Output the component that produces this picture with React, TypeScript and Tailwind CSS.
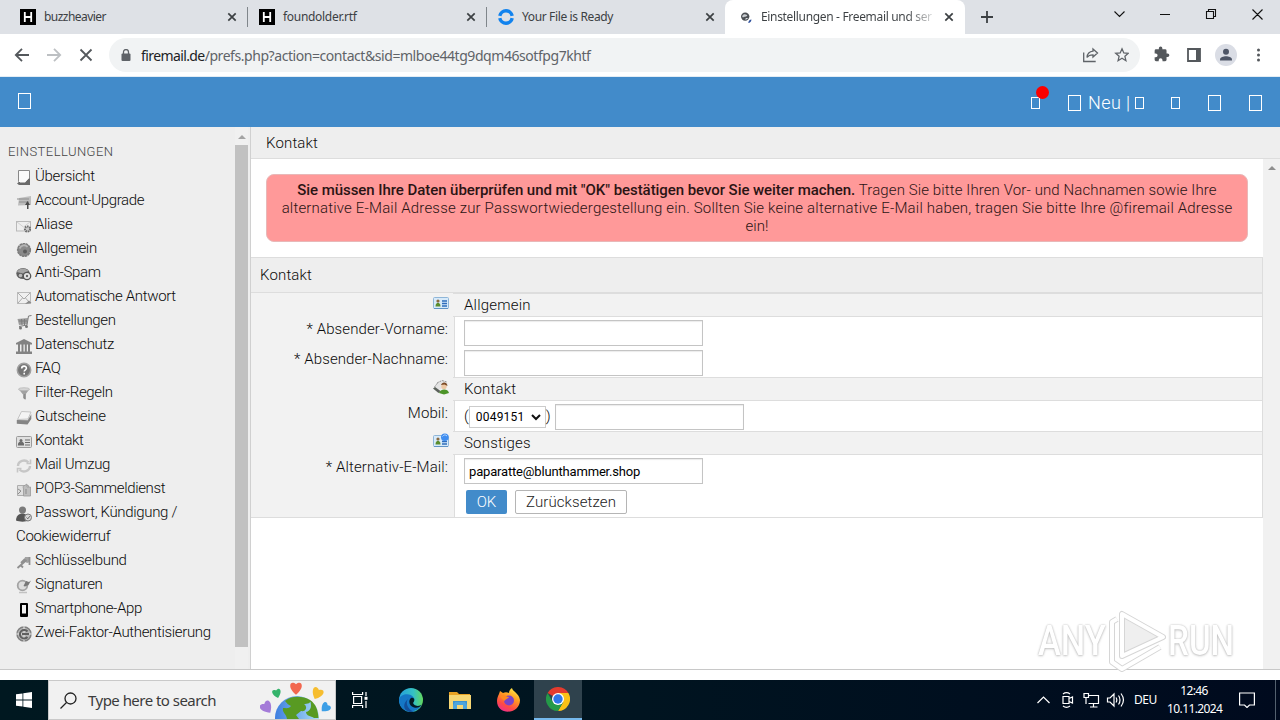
import type { ReactNode } from "react";
import clsx from "clsx";

const UI = "font-['Noto_Sans','Open_Sans',sans-serif]";
const PAGE = "font-['Roboto',sans-serif] font-light";

/* ---------- browser chrome ---------- */

function CloseX({ className }: { className?: string }) {
  return (
    <svg className={clsx("size-2.5 shrink-0", className)} viewBox="0 0 10 10">
      <path d="M1.3 1.3 8.7 8.7M8.7 1.3 1.3 8.7" stroke="#3c4043" strokeWidth="1.7" />
    </svg>
  );
}

function HIcon() {
  return (
    <svg className="size-4 shrink-0" viewBox="0 0 16 16">
      <rect width="16" height="16" fill="#000" />
      <path d="M4.8 3v10M11.2 3v10M5 8h6" stroke="#fff" strokeWidth="1.8" fill="none" />
    </svg>
  );
}

function RingIcon() {
  return (
    <svg className="size-4 shrink-0" viewBox="0 0 16 16" fill="none" stroke="#1283ee" strokeWidth="3.4">
      <path d="M1.8 6.9a6.3 6.3 0 0 1 12.4 0" />
      <path d="M14.2 9.1a6.3 6.3 0 0 1-12.4 0" />
    </svg>
  );
}

function GlobeIcon() {
  return (
    <svg className="size-4 shrink-0" viewBox="0 0 16 16">
      <circle cx="6.200" cy="7.6" r="4.200" fill="#4c5054" />
      <path d="M3.200 7.300c1-2.600 3.400-2.200 4.800-1.200 1 .8-.6 1.600-1.800 1.600S3.400 9.400 3.200 7.300Z" fill="#c9cdd1" />
      <path d="M6 10.300c.5-1 1.800-1.400 3-1.200-.6 1.300-1.800 1.800-3 1.200Z" fill="#dfe3e6" />
      <path d="M9.300 14c.2-2.200 1.300-3.200 3.200-3.500-.2 2.200-1.500 3.300-3.200 3.500Z" fill="#2d4f9c" />
    </svg>
  );
}

function Tab({ icon, title, wide, track }: { icon: ReactNode; title: string; wide: string; track: string }) {
  return (
    <div className={clsx("flex h-full items-center", wide)}>
      {icon}
      <span className={clsx("ml-2 flex-1 whitespace-nowrap", track)}>{title}</span>
      <CloseX />
    </div>
  );
}

function TabStrip() {
  return (
    <div className={clsx("flex h-[34px] bg-[#dee1e6] text-[12px] text-[#3c4043]", UI)}>
      <div className="flex items-center pl-5">
        <Tab icon={<HIcon />} title="buzzheavier" wide="w-[217px]" track="tracking-[-0.55px]" />
        <div className="ml-[10px] h-5 w-px bg-[#80868b]" />
        <Tab icon={<HIcon />} title="foundolder.rtf" wide="ml-[11px] w-[217px]" track="tracking-[-0.3px]" />
        <div className="ml-[10px] h-5 w-px bg-[#80868b]" />
        <Tab icon={<RingIcon />} title="Your File is Ready" wide="ml-[11px] w-[217px]" track="tracking-[-0.37px]" />
      </div>
      <div className="ml-[10px] flex w-[240px] items-center rounded-t-lg bg-white pr-[11px] pl-[14px]">
        <GlobeIcon />
        <span className="ml-[6px] bg-linear-to-r from-[#3c4043] from-85% to-[#3c4043]/20 bg-clip-text tracking-[-0.33px] whitespace-nowrap text-transparent">
          Einstellungen - Freemail und ser
        </span>
        <CloseX className="ml-auto" />
      </div>
      <svg className="mt-[11px] ml-[16px] size-3" viewBox="0 0 12 12">
        <path d="M6 0v12M0 6h12" stroke="#3c4043" strokeWidth="1.8" />
      </svg>
      <svg className="mt-[6px] ml-auto h-4 w-[166px]" viewBox="0 0 166 16" fill="none" stroke="#111" strokeWidth="1.1">
        <path d="m0.500 5.500 5 5 5-5M46 8.500h10M92.500 5.500h7v7h-7zM94.500 5.500v-2h7v7h-2M138.500 3.500l10 10M148.500 3.500l-10 10" />
      </svg>
    </div>
  );
}

function Toolbar() {
  return (
    <div className={clsx("flex h-[43px] items-center border-b border-[#e3edf5] bg-white", UI)}>
      <svg className="ml-[14px] h-4 w-20 shrink-0" viewBox="0 0 80 16" fill="none" strokeWidth="1.8">
        <path d="M15 8H2M8 1.800 1.800 8 8 14.200" stroke="#54585c" />
        <path d="M33 8h13M40 1.800 46.200 8 40 14.200" stroke="#bdc0c3" />
        <path d="m66.500 2.500 11 11M77.500 2.500l-11 11" stroke="#54585c" />
      </svg>
      <div className="ml-[15px] flex h-[34px] w-[1031px] items-center rounded-full bg-[#f1f3f4] pr-[11px] pl-[12px]">
        <svg className="h-3 w-[10px] shrink-0" viewBox="0 0 10 12">
          <rect x="0.500" y="4.500" width="9" height="7.500" rx="1" fill="#5f6368" />
          <path d="M2.500 5V3a2.500 2.500 0 0 1 5 0v2" fill="none" stroke="#5f6368" strokeWidth="1.300" />
        </svg>
        <span className="ml-[10px] text-[14px] tracking-[-0.44px] whitespace-nowrap text-[#5f6368]">
          <span className="tracking-[-0.6px] text-[#202124]">firemail.de</span>/prefs.php?action=contact&amp;sid=mlboe44tg9dqm46sotfpg7khtf
        </span>
        <svg className="ml-auto h-4 w-[46px] shrink-0" viewBox="0 0 46 16" fill="none" stroke="#5f6368" strokeWidth="1.300">
          <path d="M.7 5.500v9h12M10 2l4.500 4-4.500 4V7.800c-3 0-4.800.8-6 2.700C4.300 7 6.500 4.500 10 4.200z" />
          <path d="m39 1.800 1.800 4.100 4.500.4-3.400 3 1 4.400-3.900-2.400-3.900 2.400 1-4.400-3.400-3 4.500-.4z" />
        </svg>
      </div>
      <svg className="ml-3 size-5" viewBox="0 0 24 24" fill="#54585c">
        <path d="M20.500 11H19V7a2 2 0 0 0-2-2h-4V3.500a2.500 2.500 0 0 0-5 0V5H4a2 2 0 0 0-2 2v3.800h1.500a2.700 2.700 0 0 1 0 5.400H2V20c0 1.100.9 2 2 2h3.800v-1.500a2.700 2.700 0 0 1 5.400 0V22H17a2 2 0 0 0 2-2v-4h1.500a2.500 2.500 0 0 0 0-5Z" transform="translate(1.500 1) scale(.84)" />
      </svg>
      <svg className="ml-[15px] h-[14px] w-[14px]" viewBox="0 0 14 14">
        <path d="M1 1h12v12H1z" fill="none" stroke="#54585c" strokeWidth="1.800" />
        <path d="M9 1h4v12H9z" fill="#54585c" />
      </svg>
      <svg className="ml-[14px] size-[22px]" viewBox="0 0 22 22">
        <circle cx="11" cy="11" r="11" fill="#dadde5" />
        <circle cx="11" cy="7.800" r="3" fill="#4d5566" />
        <path d="M5 16.500v-1c0-2 3.500-3.200 6-3.200s6 1.200 6 3.200v1z" fill="#4d5566" />
      </svg>
      <svg className="ml-5 h-[14px] w-1" viewBox="0 0 4 14" fill="#54585c">
        <circle cx="1.500" cy="2" r="1.500" />
        <circle cx="1.500" cy="7" r="1.500" />
        <circle cx="1.500" cy="12" r="1.500" />
      </svg>
    </div>
  );
}

/* ---------- site header ---------- */

function Box({ className }: { className: string }) {
  return <span className={clsx("shrink-0 border border-white", className)} />;
}

function SiteHeader() {
  return (
    <header className={clsx("flex h-[50px] items-start bg-[#428bca] text-white", PAGE)}>
      <Box className="mt-4 ml-[18px] h-4 w-[13px]" />
      <div className="ml-auto flex h-[52px] items-center pr-[18px]">
        <span className="relative mr-7 flex">
          <Box className="h-3 w-[9px]" />
          <span className="absolute -top-[11px] left-[5px] size-[13px] rounded-full bg-[#fb0000]" />
        </span>
        <Box className="h-4 w-[13px]" />
        <span className="ml-[7px] w-[47px] text-[18px] leading-5 tracking-[0.4px] whitespace-nowrap">Neu |</span>
        <Box className="h-3 w-[9px]" />
        <Box className="ml-[27px] h-3 w-[9px]" />
        <Box className="ml-7 h-4 w-[13px]" />
        <Box className="ml-7 h-4 w-[13px]" />
      </div>
    </header>
  );
}

/* ---------- sidebar ---------- */

const navIcons: Record<string, ReactNode> = {
  page: (
    <>
      <path d="M2.500.500h11v13h-10l-1-2z" fill="#fafafa" stroke="#888" />
      <path d="M1 13.500 3 12h6l3.500-3.500H14V15H3z" fill="#6a6a6a" />
      <path d="M4 12.500h5l3.500-4V2H4z" fill="#fafafa" />
    </>
  ),
  upgrade: (
    <>
      <path d="M3 4 15 2v9L2 11.500z" fill="#bdbdbd" />
      <path d="M1 5h12M3 8h10" stroke="#8d8d8d" />
      <path d="m11.500 7-2.500 4h2v4h1.500v-4H14z" fill="#4a4a4a" />
    </>
  ),
  mailGear: (
    <>
      <rect x=".5" y="3.500" width="14" height="9.500" fill="#eee" stroke="#b9b9b9" />
      <path d="m1 4 6.500 5L14 4" stroke="#d0d0d0" fill="none" />
      <circle cx="11.500" cy="11" r="2.600" fill="#ccc" stroke="#6b6b6b" strokeWidth="2" strokeDasharray="1.500 .8" />
    </>
  ),
  gear: (
    <>
      <circle cx="8" cy="8" r="6.200" fill="#8a8a8a" stroke="#7d7d7d" strokeWidth="1.800" strokeDasharray="2.500 .5" />
      <path d="M3.500 6.500c2-4 6-4 8-1.500" stroke="#b5b5b5" strokeWidth="1.800" fill="none" />
      <circle cx="9" cy="9.500" r="2" fill="#5c5c5c" />
    </>
  ),
  spam: (
    <>
      <ellipse cx="7" cy="7.500" rx="6.700" ry="5.500" fill="#5f5f5f" />
      <path d="M.8 6c3-5 9-4 12-1L7 7.500z" fill="#a5a5a5" />
      <circle cx="11" cy="10" r="3.700" fill="#e6e6e6" stroke="#555" strokeWidth="1.300" />
      <circle cx="4.500" cy="9.500" r="1.800" fill="#bbb" />
      <circle cx="11" cy="10" r="1.200" fill="#666" />
    </>
  ),
  mail: (
    <>
      <rect x="1.500" y="2.500" width="13" height="11" fill="#efefef" stroke="#bbb" />
      <path d="m2 3 6 6 6-6M2 13l4.500-5M14 13 9.500 8" stroke="#aaa" fill="none" />
      <path d="m9 14 4-3.500 2.500 2.500z" fill="#888" />
    </>
  ),
  cart: (
    <>
      <path d="M1.500 5 12 4l-1 6-8 1z" fill="#9c9c9c" />
      <path d="M15.500 1.500 12.500 2 11 11l-8 1.500M3 7h8M5.500 5l.5 6M8.500 5v6" stroke="#7d7d7d" fill="none" />
      <circle cx="4.500" cy="14" r="1.500" fill="#777" />
      <circle cx="10.500" cy="12.500" r="1.500" fill="#777" />
    </>
  ),
  bank: (
    <>
      <path d="M0 5 8 1l8 4v1.500H0zM0 13.500h16V16H0z" fill="#838383" />
      <path d="M3 6v8M6.500 6v8M9.800 6v8M13 6v8" stroke="#838383" strokeWidth="2" />
    </>
  ),
  help: (
    <>
      <circle cx="8" cy="8" r="6.700" fill="#757575" stroke="#a0a0a0" strokeWidth="1.500" />
      <path d="M5.700 6.500C5.700 3.300 10.500 3.500 10.400 6.300c0 1.500-2.200 1.600-2.200 3.300M8.200 10.800v1.700" stroke="#fff" strokeWidth="1.600" fill="none" />
    </>
  ),
  funnel: (
    <>
      <path d="M2.500 3h11L9.500 8.500V14l-2.500-2V8.500z" fill="#a2a2a2" />
      <ellipse cx="8" cy="3.200" rx="5.500" ry="1.500" fill="#d5d5d5" stroke="#aaa" strokeWidth=".6" />
      <path d="M9 8v5" stroke="#777" />
    </>
  ),
  voucher: (
    <>
      <path d="M5.500 1.500 15 2l-3 7-10.500.500z" fill="#f4f4f4" stroke="#c4c4c4" />
      <path d="m.8 10 11 .3 3.500-6V9l-3.800 5.500-10.700-.7z" fill="#858585" />
    </>
  ),
  card: (
    <>
      <rect x=".5" y="2.500" width="15" height="11" rx="1" fill="#e0e0e0" stroke="#9b9b9b" />
      <circle cx="5" cy="6.500" r="1.500" fill="#6b6b6b" />
      <path d="M2.500 11c0-4 5-4 5 0zM9 6h5M9 8.500h5M9 11h5" stroke="#6b6b6b" fill="#6b6b6b" strokeWidth="1.200" />
    </>
  ),
  sync: (
    <g fill="none" stroke="#c6c6c6" strokeWidth="2.400">
      <path d="M2 8a6 5.500 0 0 1 10.500-3.500M14 8A6 5.500 0 0 1 3.500 11.500" />
      <path d="M14.500 1.500v4h-4M1.500 14.500v-4h4" strokeWidth="1.600" />
    </g>
  ),
  pop: (
    <>
      <path d="M1.500 3.500h11v10h-11z" fill="#dedede" stroke="#adadad" />
      <path d="M7 4.500 11 2v3h3.500v9H7.500V7z" fill="#bdbdbd" stroke="#999" strokeWidth=".8" />
      <path d="m2 7 3 2-3 3M10 7v5" stroke="#8d8d8d" fill="none" />
    </>
  ),
  user: (
    <>
      <circle cx="6.500" cy="4" r="3.500" fill="#7a7a7a" />
      <path d="M0 14.500C0 5 12.500 5 13 14.500 10 16 3 16 0 14.500z" fill="#555" />
      <circle cx="12" cy="11.500" r="3.500" fill="#d5d5d5" stroke="#777" />
      <path d="m10.500 11.500 1.300 1.300 2-2.600" stroke="#666" fill="none" />
    </>
  ),
  keys: (
    <>
      <path d="M9 3h5v5l-3 1-3-2z" fill="#a2a2a2" />
      <path d="m10.500 6-9 8M5 9l4-4M5 11.500l2 2M13.500 3v8" stroke="#8f8f8f" strokeWidth="1.800" />
    </>
  ),
  sign: (
    <>
      <circle cx="6.500" cy="7.500" r="4.800" fill="#ddd" stroke="#a4a4a4" strokeWidth="1.800" />
      <path d="M7.500 8 10 3l3 1 2-1.500L12.500 7 9 8.500z" fill="#777" />
      <path d="M3 14.500h8" stroke="#c2c2c2" strokeWidth="1.500" />
    </>
  ),
  phone: (
    <>
      <rect x="4" y="1" width="8" height="14" rx="1" fill="#000" />
      <rect x="6" y="3" width="4" height="8.500" fill="#f3f3f3" />
    </>
  ),
  auth: (
    <>
      <circle cx="8" cy="8" r="7" fill="#b5b5b5" stroke="#808080" strokeWidth="1.500" />
      <path d="M8 0v16M0 8h16" stroke="#e5e5e5" />
      <path d="M11.500 5.500A4.300 4.300 0 1 0 11.500 11M6 8h7" stroke="#5f5f5f" strokeWidth="2" fill="none" />
    </>
  ),
};

const navItems: { icon: string; label: string }[] = [
  { icon: "page", label: "Übersicht" },
  { icon: "upgrade", label: "Account-Upgrade" },
  { icon: "mailGear", label: "Aliase" },
  { icon: "gear", label: "Allgemein" },
  { icon: "spam", label: "Anti-Spam" },
  { icon: "mail", label: "Automatische Antwort" },
  { icon: "cart", label: "Bestellungen" },
  { icon: "bank", label: "Datenschutz" },
  { icon: "help", label: "FAQ" },
  { icon: "funnel", label: "Filter-Regeln" },
  { icon: "voucher", label: "Gutscheine" },
  { icon: "card", label: "Kontakt" },
  { icon: "sync", label: "Mail Umzug" },
  { icon: "pop", label: "POP3-Sammeldienst" },
  { icon: "user", label: "Passwort, Kündigung / Cookiewiderruf" },
  { icon: "keys", label: "Schlüsselbund" },
  { icon: "sign", label: "Signaturen" },
  { icon: "phone", label: "Smartphone-App" },
  { icon: "auth", label: "Zwei-Faktor-Authentisierung" },
];

function Sidebar() {
  return (
    <aside className="flex w-[250px] shrink-0 bg-[#eeeeee]">
      <div className="w-[235px] pt-[14px]">
        <h2 className="pl-2 text-[13px] leading-[22px] font-light tracking-[0.45px] text-[#444]">EINSTELLUNGEN</h2>
        <ul className="pt-px pl-4 text-[15px] leading-6 tracking-[-0.34px] text-[#0c0c0c]">
          {navItems.map((item) => (
            <li key={item.label} className="w-[200px]">
              <svg className="relative top-[2px] mr-[3px] inline-block size-4 align-[-3px]" viewBox="0 0 16 16">
                {navIcons[item.icon]}
              </svg>
              {item.label}
            </li>
          ))}
        </ul>
      </div>
      <div className="flex w-[13px] flex-col items-center bg-[#f0f0f0]">
        <svg className="mt-[8px] h-[4px] w-2" viewBox="0 0 8 4">
          <path d="M0 4 4 0l4 4z" fill="#a3a3a3" />
        </svg>
        <div className="mt-[6px] h-[502px] w-full bg-[#c1c1c1]" />
      </div>
    </aside>
  );
}

/* ---------- form ---------- */

function IdCard({ badge }: { badge?: boolean }) {
  return (
    <svg className="size-4" viewBox="0 0 16 16">
      <rect x=".5" y="2.500" width="15" height="11" rx="1" fill="#d7eafa" stroke="#8fb6d8" />
      <path d="M1 13.500h14" stroke="#5f93c4" />
      <circle cx="5" cy="6" r="1.600" fill="#8a6a40" />
      <path d="M2.500 11.500c0-5 5-5 5 0z" fill="#5b8d2d" />
      <path d="M9 6h5M9 8.500h5M9 11h5" stroke="#2f6dbb" strokeWidth="1.300" />
      {badge && <circle cx="11.800" cy="4.200" r="3.800" fill="#3f8df0" />}
      {badge && <path d="M9.500 3.500c1.500-2 3-2 4.500-.5" stroke="#b5d7ff" fill="none" />}
    </svg>
  );
}

function ContactIcon() {
  return (
    <svg className="size-4" viewBox="0 0 16 16">
      <path d="M1 8 6 2h6l3 3-2 3-8 3z" fill="#e4e4e4" />
      <path d="m1.500 8 3-4M4 4l5-2.500 5 1.500" stroke="#999" fill="none" strokeDasharray="2 .8" />
      <circle cx="11" cy="7.500" r="2.700" fill="#edc8a4" />
      <path d="M8 6c1-3.500 6-3.500 6.500 1l-3-1.500z" fill="#7c4a24" />
      <path d="M6 14c1-4.500 9-5 10 0l-5 1.500z" fill="#4c9428" />
      <path d="m0 9.500 2-1.500 5.500 4-2 2z" fill="#5c625c" />
    </svg>
  );
}

function Section({ icon, title, children }: { icon: ReactNode; title: string; children: ReactNode }) {
  return (
    <>
      <div className="flex h-6 bg-[#f2f2f2]">
        <div className="flex w-[202px] justify-end pt-[2px] pr-[4px]">{icon}</div>
        <div className="flex-1 border-y border-[#ddd] pl-[11px] leading-[23px] tracking-[0.2px]">{title}</div>
      </div>
      {children}
    </>
  );
}

function Row({ label, height, children }: { label?: string; height: string; children: ReactNode }) {
  return (
    <div className={clsx("flex", height)}>
      <div className="w-[202px] bg-[#f2f2f2] pr-[5px] text-right leading-6 tracking-[0.1px]">{label}</div>
      <div className="ml-px flex flex-1 items-start border-l border-[#ddd] pl-[9px]">{children}</div>
    </div>
  );
}

const FIELD = "border border-[#c4c4c4] bg-white text-[13px] font-normal text-black shadow-[inset_0_1px_1px_rgba(0,0,0,0.08)] outline-none";

function ContactForm() {
  return (
    <form className="mt-[15px] border-y border-r border-[#ddd] bg-[linear-gradient(to_right,#f2f2f2_203px,#fff_203px)]">
      <div className="h-[35px] border-b border-[#ddd] bg-[#eeeeee] pl-[9px] leading-[34px] tracking-[0.15px]">Kontakt</div>
      <Section icon={<IdCard />} title="Allgemein">
        <Row label="* Absender-Vorname:" height="h-[30px]">
          <input className={clsx("mt-[3px] h-[26px] w-[239px]", FIELD)} />
        </Row>
        <Row label="* Absender-Nachname:" height="h-[30px]">
          <input className={clsx("mt-[3px] h-[26px] w-[239px]", FIELD)} />
        </Row>
      </Section>
      <Section icon={<ContactIcon />} title="Kontakt">
        <Row label="Mobil:" height="h-[30px]">
          <span className="mt-[2px] leading-[26px]">(</span>
          <span className="mt-[5px] flex h-[22px] w-[77px] items-center justify-between border border-[#ccc] bg-white pr-[4px] pl-[6px] text-[12px] font-normal tracking-[0.2px] text-black">
            0049151
            <svg className="h-[7px] w-[10px]" viewBox="0 0 10 7">
              <path d="m1 1 4 4 4-4" fill="none" stroke="#111" strokeWidth="2" />
            </svg>
          </span>
          <span className="mt-[2px] leading-[26px]">)</span>
          <input className={clsx("mt-[3px] ml-1 h-[26px] w-[189px]", FIELD)} />
        </Row>
      </Section>
      <Section icon={<IdCard badge />} title="Sonstiges">
        <Row label="* Alternativ-E-Mail:" height="h-[32px]">
          <input
            defaultValue="paparatte@blunthammer.shop"
            className={clsx("mt-[3px] h-[26px] w-[239px] px-1 tracking-[-0.17px]", FIELD)}
          />
        </Row>
        <Row height="h-[30px]">
          <button type="button" className="mt-[3px] ml-[2px] h-6 w-[41px] rounded-xs bg-[#428bca] text-white">OK</button>
          <button type="button" className="mt-[3px] ml-2 h-6 w-28 rounded-xs border border-[#b5b5b5] bg-white tracking-[0.1px] text-[#222]">
            Zurücksetzen
          </button>
        </Row>
      </Section>
    </form>
  );
}

function Watermark() {
  return (
    <div className="absolute top-[451px] left-[787px] flex h-[62px] w-[200px] items-center">
      <span className="w-[66px] origin-left scale-x-[0.82] text-[42px] leading-[44px] font-medium text-white [text-shadow:0_0_2px_#b5b5b5,0_1px_3px_#c9c9c9]">
        ANY
      </span>
      <svg className="ml-[3px] h-[62px] w-[60px]" viewBox="0 0 60 62" fill="none">
        <path d="M15 4v42l41-19z" fill="#efefef" />
        <g stroke="#d6d6d6" strokeWidth="6" strokeLinejoin="round">
          <path d="M10 9 5 12v40l10 7 38-22" />
          <path d="M15 4v42l41-19z" />
        </g>
        <g stroke="#fff" strokeWidth="4" strokeLinejoin="round">
          <path d="M10 9 5 12v40l10 7 38-22" />
          <path d="M15 4v42l41-19z" />
        </g>
      </svg>
      <span className="ml-px w-[64px] origin-left scale-x-[0.79] text-[42px] leading-[44px] font-medium text-white [text-shadow:0_0_2px_#b5b5b5,0_1px_3px_#c9c9c9]">
        RUN
      </span>
    </div>
  );
}

function Main() {
  return (
    <main className="flex flex-1 flex-col border-l border-[#d0d0d0] text-[15px] text-[#0c0c0c]">
      <div className="h-8 border-b border-[#ddd] bg-[#eeeeee] pl-[15px] leading-8 tracking-[0.15px]">Kontakt</div>
      <div className="relative flex flex-1">
        <div className="w-[1012px]">
          <div className="mt-[15px] mr-[15px] ml-[15px] h-[68px] rounded-lg border border-[#e8b8b8] bg-[#ff9999] px-3 pt-[6px] text-center leading-[18px] whitespace-nowrap text-[#2b1414]">
            <b className="font-medium tracking-[-0.06px]">Sie müssen Ihre Daten überprüfen und mit "OK" bestätigen bevor Sie weiter machen.</b>{" "}
            <span className="tracking-[0.11px]">Tragen Sie bitte Ihren Vor- und Nachnamen sowie Ihre</span>
            <br />
            <span className="tracking-[0.175px]">
              alternative E-Mail Adresse zur Passwortwiedergestellung ein. Sollten Sie keine alternative E-Mail haben, tragen Sie bitte Ihre @firemail Adresse
            </span>
            <br />
            ein!
          </div>
          <ContactForm />
        </div>
        <div className="flex w-[17px] justify-center bg-[#f1f1f1] pt-[7px]">
          <svg className="h-[4px] w-2" viewBox="0 0 8 4">
            <path d="M0 4 4 0l4 4z" fill="#8f8f8f" />
          </svg>
        </div>
        <Watermark />
      </div>
    </main>
  );
}

/* ---------- taskbar ---------- */

const HEART = "M0 3C-5-1-3-5 0-2.500 3-5 5-1 0 3Z";

function Earth() {
  return (
    <svg className="h-[38px] w-[72px]" viewBox="0 0 72 38">
      <defs>
        <linearGradient id="sea" x1="0" x2="1">
          <stop offset="0" stopColor="#3f7fe0" />
          <stop offset="1" stopColor="#a9dcf8" />
        </linearGradient>
      </defs>
      <circle cx="37" cy="37" r="22" fill="url(#sea)" />
      <path d="M25 20c5-5 17-6 25-1 2 3-3 4-6 4 4 3 2 8-3 7l-5 4 3 4H27c-1-6-5-6-4-11 3 0 6 1 8-2-3-1-4-3-6-5ZM50 19c6 4 8 10 8.500 18h-4.500c-3-2-8-2-8-6 5-1 6-6 4-12Z" fill="#589a22" />
      <path d={HEART} transform="translate(36 8) scale(1.900)" fill="#f2674f" />
      <path d={HEART} transform="translate(17 13) rotate(-15) scale(1.400)" fill="#35b36b" />
      <path d={HEART} transform="translate(57 13) rotate(25) scale(1.800)" fill="#f6bd2f" />
      <path d={HEART} transform="translate(7 27) rotate(-35) scale(1.900)" fill="#a47bd8" />
      <path d={HEART} transform="translate(65 27) rotate(45) scale(1.500)" fill="#3d9fe6" />
    </svg>
  );
}

function Edge() {
  return (
    <svg className="size-6" viewBox="0 0 24 24">
      <defs>
        <linearGradient id="edgeTop" x1="0" x2="1">
          <stop offset="0" stopColor="#249fdc" />
          <stop offset=".6" stopColor="#35c1c4" />
          <stop offset="1" stopColor="#62d85e" />
        </linearGradient>
      </defs>
      <circle cx="12" cy="12" r="12" fill="url(#edgeTop)" />
      <path d="M0 11c2-5 11-7 15-1 1 2-1 3-1 5 1 3 6 4 8.500 2C17 27 0 26 0 11Z" fill="#1577c6" />
      <path d="M9 11c-3 4 0 11 6 12.500C7 26 1 18 9 11Z" fill="#124f9b" />
      <path d="M12 10c4-1 4 3 2 5 1 3 6 4 9 1.500 3-4-1 5-8 3-5-1.500-6-7-3-9.500Z" fill="#041922" />
    </svg>
  );
}

function Explorer() {
  return (
    <svg className="h-[19px] w-[22px]" viewBox="0 0 22 19">
      <path d="M0 1h8l2 2h11v15H0z" fill="#e9a324" />
      <path d="M0 4h22v14H0z" fill="#f7d774" />
      <path d="M4 10h14v8h-4v-4H8v4H4z" fill="#3d93cf" />
      <path d="M4 18v-4l2-3h10l2 3v4h-4v-4H8v4z" fill="#5bb1e2" opacity=".6" />
    </svg>
  );
}

function Firefox() {
  return (
    <svg className="h-6 w-[23px]" viewBox="0 0 23 24">
      <defs>
        <linearGradient id="fox" x1=".8" y1="0" x2=".3" y2="1">
          <stop offset="0" stopColor="#fff04a" />
          <stop offset=".4" stopColor="#ff9a22" />
          <stop offset=".75" stopColor="#ff4a45" />
          <stop offset="1" stopColor="#f02f8b" />
        </linearGradient>
      </defs>
      <path d="M2 6 3 3l3 2c2-1 4-1 6 0 0-2 1-4 3-5 0 3 7 5 8 12 0 15-23 16-23 1 0-3 1-5 2-7Z" fill="url(#fox)" />
      <circle cx="12" cy="12.500" r="5" fill="#7a43c9" />
      <path d="M3 8c3-2 6 1 9 1-1 2-4 2-4 4-2-1-4-3-5-5Z" fill="#ff8a1f" />
    </svg>
  );
}

function Chrome() {
  return (
    <svg className="size-6" viewBox="0 0 24 24">
      <path d="M12 12 1.600 6A12 12 0 0 1 22.400 6Z" fill="#e33b2e" />
      <path d="M12 12V6h10.400A12 12 0 0 1 12 24l5.200-9Z" fill="#fbc116" />
      <path d="M12 12l5.200 3L12 24A12 12 0 0 1 1.600 6l5.200 9Z" fill="#249a48" />
      <circle cx="12" cy="12" r="6" fill="#fff" />
      <circle cx="12" cy="12" r="4.700" fill="#2f77e8" />
    </svg>
  );
}

function Taskbar() {
  return (
    <footer className={clsx("flex h-10 bg-linear-to-r from-[#001820] via-[#001420] to-[#000a1e] text-white", UI)}>
      <div className="flex w-12 items-center justify-center">
        <svg className="size-4" viewBox="0 0 16 16" fill="#fff">
          <path d="M0 2.300 6.500 1.400v6.200H0zM7.300 1.300 16 0v7.600H7.300zM0 8.400h6.500v6.200L0 13.700zM7.300 8.400H16V16l-8.700-1.300z" />
        </svg>
      </div>
      <div className="flex w-[288px] items-center border border-[#c9c9c9] bg-[#f1f1f1] pl-[11px]">
        <svg className="size-[17px]" viewBox="0 0 17 17" fill="none" stroke="#222" strokeWidth="1.300">
          <circle cx="10.500" cy="6.500" r="5.500" />
          <path d="m6.500 10.500-6 6" />
        </svg>
        <span className="ml-[11px] text-[15px] tracking-[-0.53px] text-[#3b3b3b]">Type here to search</span>
        <span className="mr-[3px] ml-auto self-end">
          <Earth />
        </span>
      </div>
      <div className="flex w-12 items-center justify-center">
        <svg className="h-4 w-4" viewBox="0 0 16 16" fill="none" stroke="#fff" strokeWidth="1.200">
          <path d="M.6 0v2.500h10V0M.6 16v-2.500h10V16M1.600 4.500h8v7h-8zM14 0v4M14 9v7" />
          <path d="M12.500 4.800h3v3h-3z" fill="#fff" stroke="none" />
        </svg>
      </div>
      <div className="flex w-[54px] items-center justify-center"><Edge /></div>
      <div className="flex w-[44px] items-center justify-center"><Explorer /></div>
      <div className="flex w-[52px] items-center justify-center"><Firefox /></div>
      <div className="flex w-12 items-center justify-center border-b-2 border-[#76b9ed] bg-[#2f424d]"><Chrome /></div>
      <div className="ml-auto flex items-center">
        <svg className="h-4 w-[89px]" viewBox="0 0 89 16" fill="none" stroke="#fff" strokeWidth="1.200">
          <path d="m.5 11 6-6 6 6" />
          <path d="M26 4.500h6v7h-6zM32 6.500l3.500-1.500v6L32 9.500M26 2c2-1.500 5-1.500 7 0M26 14c2 1.500 5 1.500 7 0" />
          <path d="M51.500 3.500h10v8h-10M56.500 11.500V15M53 15h7.500M47 1.500h4.500v4H47zM49 5.500V12" />
          <path d="M70.500 6h2.500l4-4v12l-4-4h-2.500zM79 5.500c1 1.500 1 3.500 0 5M81.500 3.500c2 2.500 2 6.500 0 9M84 1.500c3 4 3 9 0 13" />
        </svg>
        <span className="ml-2 w-[30px] text-[12px] tracking-[-0.500px]">DEU</span>
        <div className="ml-[3px] w-[54px] text-center text-[12px] leading-[18px] tracking-[-0.600px] whitespace-nowrap">
          12:46
          <br />
          10.11.2024
        </div>
        <svg className="ml-[18px] size-4" viewBox="0 0 16 16" fill="none" stroke="#fff" strokeWidth="1.200">
          <path d="M.6 1h14.800v12H10.500L8 15.500 5.500 13H.6z" />
        </svg>
        <div className="ml-5 h-10 w-[5px] border-l border-[#53606e]" />
      </div>
    </footer>
  );
}

export default function App() {
  return (
    <div className="flex h-[720px] w-[1280px] flex-col overflow-hidden bg-white">
      <TabStrip />
      <Toolbar />
      <SiteHeader />
      <div className={clsx("flex h-[542px]", PAGE)}>
        <Sidebar />
        <Main />
      </div>
      <div className="h-[11px] border-t border-[#c8c8c8] bg-white" />
      <Taskbar />
    </div>
  );
}
